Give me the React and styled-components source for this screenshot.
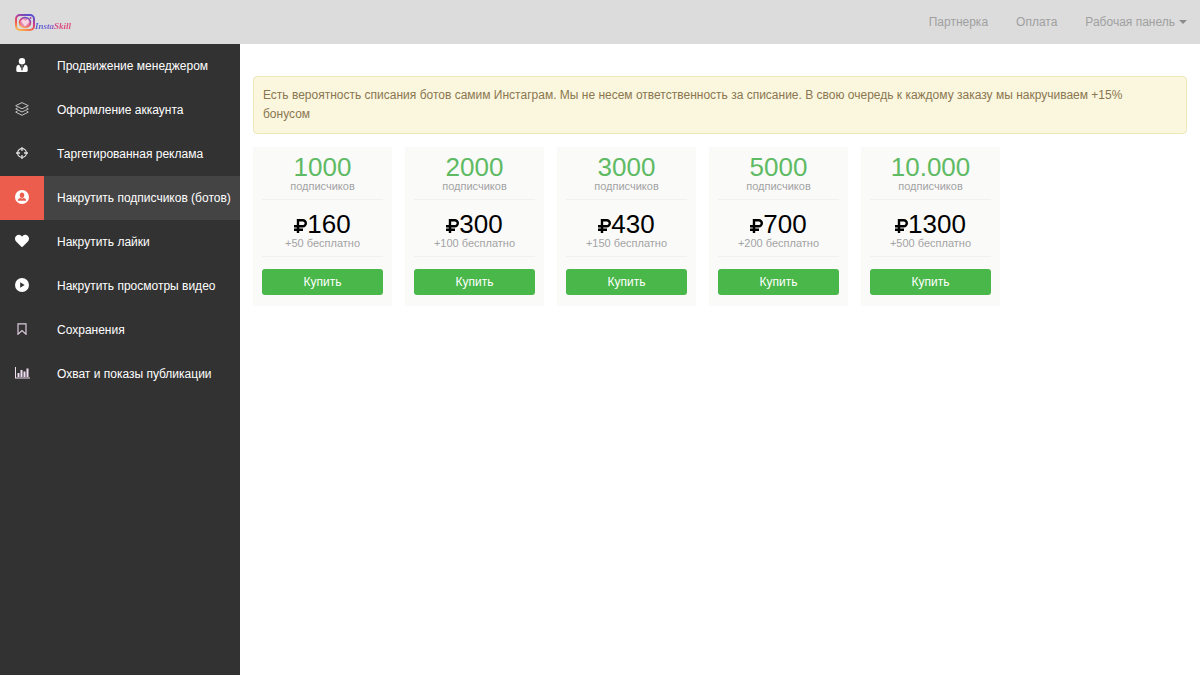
import styled, { createGlobalStyle } from 'styled-components'
import { useState } from 'react'
import { FaHeart } from 'react-icons/fa'

const menu = [
  { title: 'Продвижение менеджером', icon: <ManagerIcon /> },
  { title: 'Оформление аккаунта', icon: <LayersIcon /> },
  { title: 'Таргетированная реклама', icon: <TargetIcon /> },
  { title: 'Накрутить подписчиков (ботов)', icon: <FollowerIcon /> },
  { title: 'Накрутить лайки', icon: <FaHeart size={14} /> },
  { title: 'Накрутить просмотры видео', icon: <PlayIcon /> },
  { title: 'Сохранения', icon: <BookmarkIcon /> },
  { title: 'Охват и показы публикации', icon: <ChartIcon /> },
]

const plans = [
  { count: '1000', price: 160, bonus: 50 },
  { count: '2000', price: 300, bonus: 100 },
  { count: '3000', price: 430, bonus: 150 },
  { count: '5000', price: 700, bonus: 200 },
  { count: '10.000', price: 1300, bonus: 500 },
]

function App() {
  const [active, setActive] = useState(3)

  return (
    <Page>
      <GlobalStyle />
      <Header>
        <Logo href="#">
          <CameraIcon />
          <LogoText>InstaSkill</LogoText>
        </Logo>
        <TopNav>
          <TopLink href="#">Партнерка</TopLink>
          <TopLink href="#">Оплата</TopLink>
          <PanelButton type="button">
            Рабочая панель <Caret />
          </PanelButton>
        </TopNav>
      </Header>
      <Body>
        <Sidebar>
          {menu.map((item, idx) => (
            <MenuLink key={idx} href="#" $active={idx === active} onClick={() => setActive(idx)}>
              <IconBox $active={idx === active}>{item.icon}</IconBox>
              <MenuText>{item.title}</MenuText>
            </MenuLink>
          ))}
        </Sidebar>
        <Main>
          <Alert>
            Есть вероятность списания ботов самим Инстаграм. Мы не несем ответственность за списание. В свою очередь к каждому заказу мы накручиваем +15% бонусом
          </Alert>
          <Plans>
            {plans.map(plan => (
              <Card key={plan.count}>
                <Block>
                  <Count>{plan.count}</Count>
                  <Note>подписчиков</Note>
                </Block>
                <Block>
                  <Price><RubleIcon />{plan.price}</Price>
                  <Note>+{plan.bonus} бесплатно</Note>
                </Block>
                <BuyButton type="button">Купить</BuyButton>
              </Card>
            ))}
          </Plans>
        </Main>
      </Body>
    </Page>
  )
}

export default App

function CameraIcon() {
  return (
    <svg width="20" height="17" viewBox="0 0 20 17" fill="none">
      <defs>
        <linearGradient id="camera" x1="0.2" y1="1" x2="0.7" y2="0">
          <stop offset="0" stopColor="#fbb34c" />
          <stop offset="0.35" stopColor="#f0584f" />
          <stop offset="0.65" stopColor="#c63a90" />
          <stop offset="1" stopColor="#5b50cc" />
        </linearGradient>
      </defs>
      <rect x="1" y="1" width="18" height="15" rx="4" stroke="url(#camera)" strokeWidth="2" />
      <ellipse cx="10" cy="8.5" rx="5.5" ry="5" fill="#e58ab5" stroke="url(#camera)" strokeWidth="1.5" />
      <path d="M6 7l3-2 1 2 3-2 1 3-4 4.500z" fill="#f7d5e2" />
      <circle cx="15.500" cy="4" r="1" fill="#a63fae" />
    </svg>
  )
}

function ManagerIcon() {
  return (
    <svg width="12" height="14" viewBox="0 0 12 14" fill="currentColor">
      <circle cx="6" cy="3.200" r="3.200" />
      <path d="M3.200 6.800L6 12l2.800-5.200C10.800 7 11.700 8.300 11.700 10v2.600c0 .8-.5 1.400-1.300 1.400H1.600C.8 14 .3 13.400.3 12.600V10c0-1.700.9-3 2.900-3.200z" />
      <path d="M5 7h2l-.5 1.400L7 11.500 6 13l-1-1.500.5-3.100z" fill="#777" />
    </svg>
  )
}

function LayersIcon() {
  return (
    <svg width="14" height="14" viewBox="0 0 14 14" fill="none" stroke="#c4c4c4" strokeLinejoin="round">
      <path d="M7 .6l6.300 3.100L7 6.800.7 3.700z" />
      <path d="M2.500 5.800L.7 6.900 7 10l6.300-3.100-1.800-1.100M2.500 9L.7 10.100 7 13.300l6.300-3.200L11.500 9" />
    </svg>
  )
}

function TargetIcon() {
  return (
    <svg width="12" height="12" viewBox="0 0 12 12" fill="none" stroke="#e0e0e0">
      <circle cx="6" cy="6" r="4.400" strokeWidth="1.200" />
      <path d="M6 0v4M6 8v4M0 6h4M8 6h4" strokeWidth="1.300" />
    </svg>
  )
}

function FollowerIcon() {
  return (
    <svg width="14" height="14" viewBox="0 0 14 14">
      <circle cx="7" cy="7" r="7" fill="#fff" />
      <ellipse cx="7" cy="5.200" rx="2.200" ry="2.700" fill="#ec5d4d" />
      <path d="M2.800 10.800c.2-1.700 1-2.300 2.800-2.700L7 8.800l1.400-.7c1.800.4 2.600 1 2.800 2.700z" fill="#ec5d4d" />
    </svg>
  )
}

function PlayIcon() {
  return (
    <svg width="14" height="14" viewBox="0 0 14 14">
      <circle cx="7" cy="7" r="7" fill="#fff" />
      <path d="M5.200 4.300L9.600 7 5.200 9.700z" fill="#323232" />
    </svg>
  )
}

function BookmarkIcon() {
  return (
    <svg width="10" height="12" viewBox="0 0 10 12" fill="none" stroke="#dcc9dc" strokeWidth="1.200">
      <path d="M1 .8h8v10.400L5 7.500 1 11.200z" />
    </svg>
  )
}

function ChartIcon() {
  return (
    <svg width="15" height="12" viewBox="0 0 15 12" fill="#f0def0">
      <path d="M0 0h1v10.500h14v1H0zM2.500 6h2v4h-2zM5.500 3h2v7h-2zM8.500 4.500h2V10h-2zM11.500 1.500h2V10h-2z" />
    </svg>
  )
}

function RubleIcon() {
  return (
    <svg width="13" height="14" viewBox="0 0 13 14" fill="none" stroke="currentColor" strokeWidth="2.400">
      <path d="M4 14V1.200h4.800a2.900 2.900 0 0 1 0 6H0M0 10.800h9" />
    </svg>
  )
}

const GlobalStyle = createGlobalStyle`
* {
  box-sizing: border-box;
}
body {
  margin: 0;
  background: #fff;
  font-family: "Liberation Sans", Arial, sans-serif;
  font-size: 12px;
}
a {
  text-decoration: none;
}
button {
  font: inherit;
  border: none;
  cursor: pointer;
}
`

const Page = styled.div`
display: flex;
flex-direction: column;
min-height: 100vh;
`

const Header = styled.header`
display: flex;
align-items: center;
justify-content: space-between;
height: 44px;
padding: 0 13px 0 15px;
background: #dcdcdc;
`

const Logo = styled.a`
display: flex;
align-items: flex-end;
`

const LogoText = styled.span`
font-family: "Liberation Serif", "Times New Roman", serif;
font-size: 9px;
line-height: 10px;
font-style: italic;
font-weight: 700;
color: transparent;
background: linear-gradient(to right, #4f62d8, #7a5fd0 45%, #d8437f 60%, #e0507a);
background-clip: text;
`

const TopNav = styled.nav`
display: flex;
align-items: center;
gap: 28px;
`

const TopLink = styled.a`
color: #a0a0a0;
`

const PanelButton = styled.button`
display: flex;
align-items: center;
gap: 4px;
padding: 0;
color: #a0a0a0;
background: none;
`

const Caret = styled.span`
border: 4px solid transparent;
border-top-color: #8c8c8c;
border-bottom: none;
`

const Body = styled.div`
display: flex;
flex: 1;
`

const Sidebar = styled.nav`
flex: none;
width: 240px;
background: #323232;
`

const MenuLink = styled.a`
display: flex;
height: 44px;
color: #fff;
background: ${props => props.$active ? '#444' : 'transparent'};

&:hover {
  background: #444;
}
`

const IconBox = styled.span`
display: flex;
align-items: center;
justify-content: center;
flex: none;
width: 44px;
padding-bottom: 2px;
background: ${props => props.$active ? '#ec5d4d' : 'transparent'};
`

const MenuText = styled.span`
padding-left: 13px;
line-height: 44px;
white-space: nowrap;
`

const Main = styled.main`
flex: 1;
min-width: 0;
padding: 32px 13px;
`

const Alert = styled.div`
padding: 9px 24px 9px 9px;
border: 1px solid #ece8bc;
border-radius: 4px;
color: #8a7650;
background: #fbf7de;
line-height: 19px;
`

const Plans = styled.div`
display: flex;
flex-wrap: wrap;
gap: 13px;
margin-top: 13px;
`

const Card = styled.section`
width: 139px;
padding: 6px 9px 11px;
text-align: center;
background: #fafaf9;
`

const Block = styled.div`
height: 47px;
margin-bottom: 10px;
border-bottom: 1px solid #f1f1f1;
`

const Count = styled.div`
font-size: 26px;
line-height: 28px;
color: #5fba64;
`

const Price = styled.div`
font-size: 26px;
line-height: 28px;
color: #000;
`

const Note = styled.div`
font-size: 11px;
line-height: 11px;
color: #a3a3a3;
`

const BuyButton = styled.button`
width: 100%;
height: 26px;
margin-top: 2px;
border-radius: 3px;
color: #fff;
background: #49b749;
`
